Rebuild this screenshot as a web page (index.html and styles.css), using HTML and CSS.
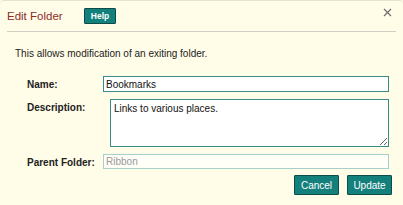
FILE: index.html
```html
<!DOCTYPE html>
<html lang="en">
<head>
    <meta charset="UTF-8">
    <title>Edit Folder</title>
    <link rel="stylesheet" href="styles.css">
</head>
<body>
    <div class="dialog">
        <div class="header">
            <span class="title">Edit Folder</span>
            <button class="btn btn-help">Help</button>
            <span class="close">
                <svg width="9" height="9" viewBox="0 0 9 9"><path d="M1 1L8 8M8 1L1 8" stroke="#6b6b6b" stroke-width="1.1" fill="none"/></svg>
            </span>
        </div>
        <p class="intro">This allows modification of an exiting folder.</p>
        <div class="form">
            <label class="lbl">Name:</label>
            <input class="field" type="text" value="Bookmarks">
            <label class="lbl">Description:</label>
            <textarea class="field area">Links to various places.</textarea>
            <label class="lbl">Parent Folder:</label>
            <input class="field" type="text" value="Ribbon" disabled>
        </div>
        <div class="actions">
            <button class="btn">Cancel</button>
            <button class="btn">Update</button>
        </div>
    </div>
</body>
</html>
```
FILE: styles.css
```css
html, body {
    margin: 0;
    padding: 0;
    background: #fffde8;
}
body {
    font-family: Arial, "Liberation Sans", sans-serif;
    font-size: 10px;
    color: #222;
}
.dialog {
    width: 403px;
    height: 205px;
    box-sizing: border-box;
    border-top: 1px solid #e4e2d0;
    border-radius: 4px 4px 0 0;
    padding: 0 7px 0 7px;
}
.header {
    display: flex;
    align-items: center;
    height: 30px;
    border-bottom: 1px solid #cfcfc4;
}
.title {
    font-size: 11.5px;
    color: #8e2a2a;
    width: 77px;
}
.close {
    margin-left: auto;
    margin-right: 4px;
    display: flex;
    margin-top: -8px;
}
.btn {
    font-family: Arial, "Liberation Sans", sans-serif;
    background: #14807c;
    color: white;
    border: 1px solid #0c4d4a;
    border-radius: 1px;
    font-size: 10px;
    padding: 0;
    height: 20px;
    cursor: pointer;
}
.btn-help {
    width: 32px;
    height: 16px;
    font-size: 8.5px;
    font-weight: bold;
}
.intro {
    margin: 15px 0 0 8px;
    line-height: 13px;
}
.form {
    display: grid;
    grid-template-columns: 76px 1fr;
    row-gap: 7px;
    margin: 16px 7px 0 20px;
}
.lbl {
    font-weight: bold;
    padding-top: 3px;
}
.field {
    font-family: Arial, "Liberation Sans", sans-serif;
    font-size: 10px;
    height: 16px;
    box-sizing: border-box;
    border: 1px solid #3a8c88;
    padding: 0 2px;
    background: white;
    color: #111;
    outline: none;
}
.field.area {
    height: 48px;
    margin-left: 7px;
    padding: 3px 3px;
    resize: vertical;
}
.field:disabled {
    border-color: #a7cfcb;
    color: #999;
    background: #fffff8;
    height: 15px;
}
.actions {
    display: flex;
    justify-content: flex-end;
    gap: 8px;
    margin: 6px 4px 0 0;
}
.actions .btn {
    width: 45px;
}
```
